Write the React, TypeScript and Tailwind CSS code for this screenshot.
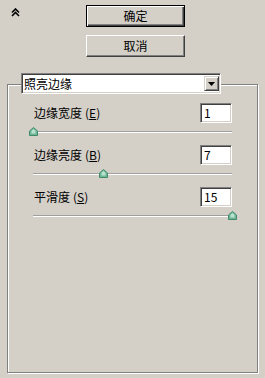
import React from 'react'

const sunken =
  'border border-t-[#808080] border-l-[#808080] border-r-white border-b-white shadow-[inset_1px_1px_0_#404040,inset_-1px_-1px_0_#d4d0c8]'

function Thumb({ pos }: { pos: number }) {
  return (
    <svg
      width="9"
      height="9"
      viewBox="0 0 9 9"
      className="absolute top-[2px]"
      style={{ left: `calc(${pos}% - 4px)` }}
    >
      <path d="M4.5 0.5 L8.5 4 L8.5 8.5 L0.5 8.5 L0.5 4 Z" fill="#6fb596" stroke="#3f8a6a" strokeWidth="1" />
      <path d="M4.5 2 L6.5 4 L6.5 6.5 L2.5 6.5 L2.5 4 Z" fill="#b9e3cf" />
    </svg>
  )
}

function Param({ label, hotkey, value, pos }: { label: string; hotkey: string; value: string; pos: number }) {
  return (
    <div className="flex flex-col">
      <div className="flex items-center justify-between h-[20px]">
        <span className="pl-[1px]">
          {label}
          <span className="ml-[3px]">
            (<span className="underline">{hotkey}</span>)
          </span>
        </span>
        <div className={`w-[32px] h-[20px] bg-white pl-[3px] leading-[17px] ${sunken}`}>{value}</div>
      </div>
      <div className="relative h-[13px] mt-[2px]">
        <div className="absolute left-0 right-0 top-[6px] h-[2px] border-t border-t-[#a0a0a0] border-b border-b-white" />
        <Thumb pos={pos} />
      </div>
    </div>
  )
}

export default function App() {
  return (
    <div
      className="w-[265px] h-[378px] bg-[#d4d0c8] text-[12px] text-black overflow-hidden"
      style={{ fontFamily: '"Noto Sans CJK SC", "Liberation Sans", sans-serif' }}
    >
      <div className="flex pt-[5px]">
        <div className="w-[86px] pl-[11px] pt-[3px]">
          <svg width="9" height="9" viewBox="0 0 9 9">
            <path d="M1 4.5 L4.5 1 L8 4.5 M1 8 L4.5 4.5 L8 8" fill="none" stroke="#000" strokeWidth="1.6" />
          </svg>
        </div>
        <div className="flex flex-col gap-[8px]">
          <button className="w-[99px] h-[22px] border border-black bg-[#d4d0c8] shadow-[inset_1px_1px_0_#fff,inset_-1px_-1px_0_#404040,inset_-2px_-2px_0_#808080] leading-none">
            确定
          </button>
          <button className="w-[99px] h-[22px] border border-t-white border-l-white border-r-[#404040] border-b-[#404040] bg-[#d4d0c8] shadow-[inset_-1px_-1px_0_#808080] leading-none">
            取消
          </button>
        </div>
      </div>

      <div className="mx-[7px] mt-[16px]">
        <div className={`relative z-10 ml-[14px] w-[200px] h-[21px] bg-white flex items-center ${sunken}`}>
          <span className="pl-[2px] flex-1 leading-none">照亮边缘</span>
          <div className="w-[15px] h-[15px] mr-[1px] bg-[#d4d0c8] border border-t-[#d4d0c8] border-l-[#d4d0c8] border-r-[#404040] border-b-[#404040] shadow-[inset_1px_1px_0_#fff,inset_-1px_-1px_0_#808080] flex items-center justify-center">
            <svg width="7" height="4" viewBox="0 0 7 4">
              <path d="M0 0 H7 L3.5 4 Z" fill="#000" />
            </svg>
          </div>
        </div>
        <div className="-mt-[10px] w-[251px] h-[289px] border border-[#808080] shadow-[1px_1px_0_#fff,inset_1px_1px_0_#fff] px-[25px] pt-[18px] flex flex-col gap-[7px]">
          <Param label="边缘宽度" hotkey="E" value="1" pos={0} />
          <Param label="边缘亮度" hotkey="B" value="7" pos={35} />
          <Param label="平滑度" hotkey="S" value="15" pos={100} />
        </div>
      </div>
    </div>
  )
}
